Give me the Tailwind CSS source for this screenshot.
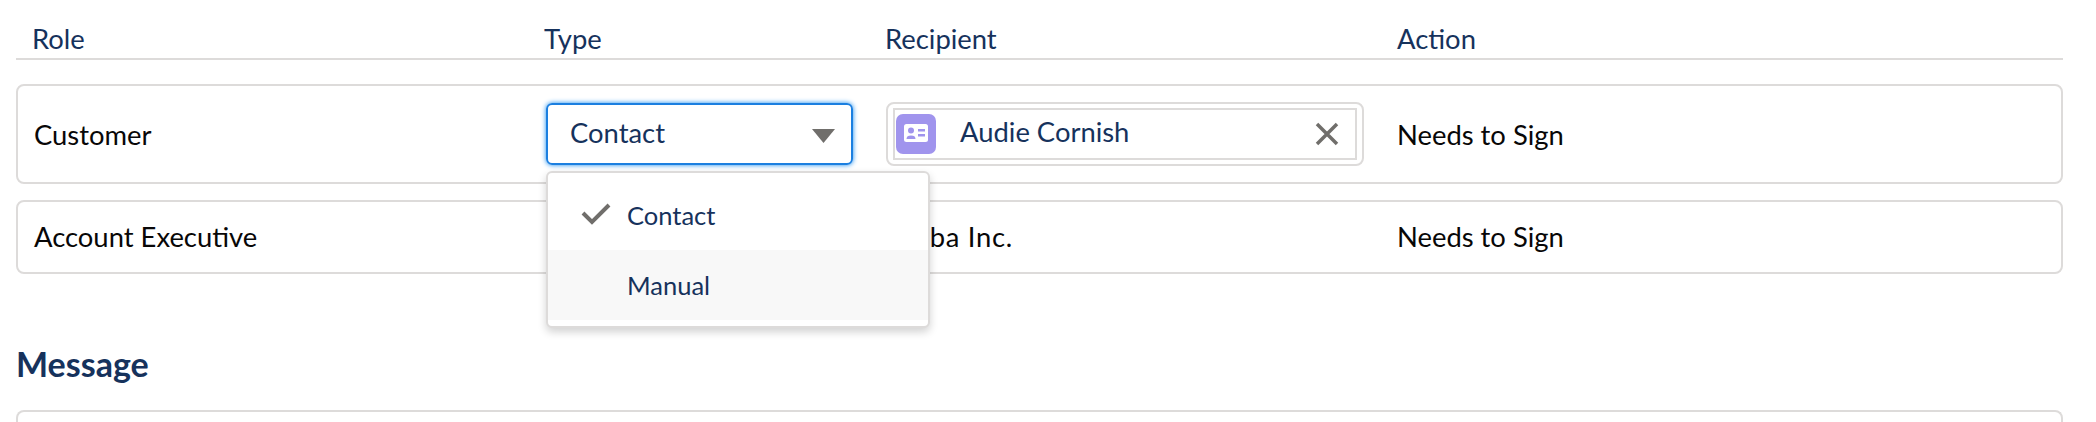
<!DOCTYPE html>
<html lang="en">
<head>
    <meta charset="UTF-8">
    <title>Recipients</title>
    <script src="https://cdn.jsdelivr.net/npm/@tailwindcss/browser@4"></script>
</head>
<body class="bg-white h-[422px] overflow-hidden font-['Lato','Open_Sans',sans-serif] text-[27.4px]">
    <div class="pl-4 pr-[33px]">
        <!-- table header -->
        <div class="grid grid-cols-[528px_341px_512px_1fr] h-[60px] pt-[22px] border-b-2 border-[#dddbda] text-[#16325c] leading-[33px]">
            <div class="pl-4">Role</div>
            <div>Type</div>
            <div>Recipient</div>
            <div>Action</div>
        </div>

        <!-- customer row -->
        <div class="relative mt-6 h-[100px] border-2 border-[#dddbda] rounded-lg grid grid-cols-[528px_339px_512px_1fr] items-center text-[#080707]">
            <div class="pl-4 mt-0.5">Customer</div>
            <div>
                <div class="w-[307px] h-[62px] pl-[22px] pr-4 flex items-center justify-between rounded-md border-2 border-[#1b7fe0] shadow-[0_0_5px_#1589ee] text-[#16325c]">
                    <span class="-mt-0.5">Contact</span>
                    <svg class="w-[23px] h-[14px] mt-1" viewBox="0 0 23 14"><path d="M0 0h23L11.500 14z" fill="#706e6b"/></svg>
                </div>
            </div>
            <div class="pl-[1px]">
                <div class="w-[478px] h-[64px] py-1 px-[5px] border-2 border-[#dddbda] rounded-lg">
                    <div class="h-[52px] border-2 border-[#dddbda] flex items-center pl-[1px] pr-4 text-[#16325c]">
                        <svg class="w-10 h-10 shrink-0" viewBox="0 0 40 40">
                            <rect width="40" height="40" rx="7" fill="#a094ed"/>
                            <rect x="8" y="10" width="24" height="18" rx="2.500" fill="#fff"/>
                            <circle cx="15" cy="16.500" r="3" fill="#a094ed"/>
                            <path d="M10.500 25c0-2.500 1.500-3.500 4.500-3.500s4.500 1 4.500 3.500z" fill="#a094ed"/>
                            <path d="M22 15h7v2.500h-7zM22 20h7v2.500h-7z" fill="#a094ed"/>
                        </svg>
                        <span class="ml-6 flex-1 -mt-1">Audie Cornish</span>
                        <svg class="w-6 h-6" viewBox="0 0 24 24"><path d="M2 2l20 20M22 2L2 22" stroke="#706e6b" stroke-width="3.500" fill="none"/></svg>
                    </div>
                </div>
            </div>
            <div class="mt-0.5">Needs to Sign</div>

            <!-- open type menu -->
            <div class="absolute z-10 left-[528px] top-[85px] w-[384px] h-[157px] bg-white rounded-md border-2 border-[#dddbda] shadow-[0_4px_8px_rgba(0,0,0,0.18)] pt-[7px] text-[#16325c] text-[25.5px]">
                <div class="h-[70px] flex items-center relative pl-[79px]">
                    <svg class="absolute left-[33px] top-[22px] w-[30px] h-[23px]" viewBox="0 0 30 23"><path d="M2 11l9 9L28 3" stroke="#706e6b" stroke-width="4" fill="none"/></svg>
                    <span>Contact</span>
                </div>
                <div class="h-[70px] bg-[#f8f8f8] flex items-center pl-[79px]">Manual</div>
            </div>
        </div>

        <!-- account executive row -->
        <div class="mt-4 h-[74px] border-2 border-[#dddbda] rounded-lg grid grid-cols-[528px_339px_512px_1fr] items-center text-[#080707]">
            <div class="pl-4">Account Executive</div>
            <div></div>
            <div class="-ml-[11px] tracking-[0.7px]">Zumba Inc.</div>
            <div>Needs to Sign</div>
        </div>

        <!-- message -->
        <h2 class="mt-[70px] text-[34px] font-bold text-[#16325c] leading-10">Message</h2>
        <div class="mt-[26px] h-3 border-2 border-b-0 border-[#dddbda] rounded-t-lg"></div>
    </div>
</body>
</html>
